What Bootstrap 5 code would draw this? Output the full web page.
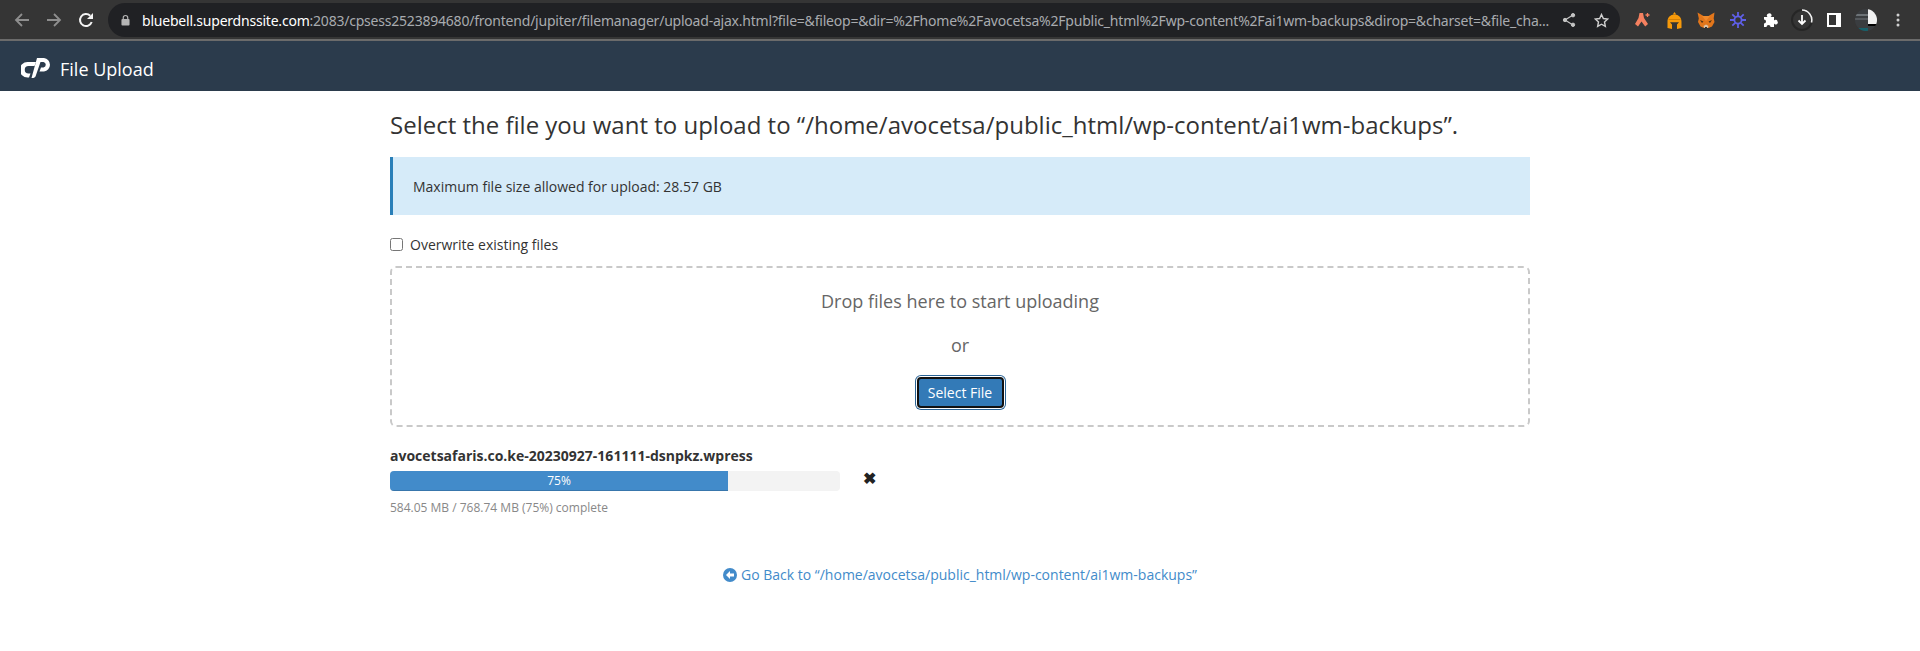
<!DOCTYPE html>
<html lang="en">
<head>
<meta charset="utf-8">
<title>File Upload</title>
<link href="https://cdn.jsdelivr.net/npm/bootstrap@5.3.0/dist/css/bootstrap.min.css" rel="stylesheet">
<style>
body{font-family:"Open Sans","Noto Sans",sans-serif;font-size:14px;color:#333;background:#fff;height:651px;overflow:hidden}
.chrome-bar{height:41px;background:#353535;border-bottom:2px solid #6b6b6b;padding:1px 6px 0 6px}
.tool-slot{width:32px;height:34px;flex:none}
.url-pill{width:1512px;height:34px;background:#202124;border-radius:17px;margin:0 6px;padding:0 3px 0 13px;flex:none}
.url-text{font-family:"Noto Sans",sans-serif;font-size:14px;letter-spacing:-.215px;color:#a8abaf;white-space:nowrap;overflow:hidden;margin-left:12px;min-width:0;flex:1 1 0}
.url-text b{font-weight:400;color:#fff}
.top-nav{height:50px;background:#2b3b4c;padding:3px 0 0 21px;color:#fff;font-size:18px}
.top-nav span{margin-left:9px;padding-top:3px}
.page-box{width:1140px;margin:0 auto}
.page-title{font-size:24px;font-weight:400;line-height:33px;margin:17px 0 0;color:#333;white-space:nowrap}
.note-box{height:58px;margin-top:16px;background:#d6ebf9;border-left:3px solid #2a7fb8;padding-left:20px;font-size:14px}
.over-row{margin-top:19px;height:20px}
.over-row input{width:13px;height:13px;margin:0 7px 0 0}
.drop-box{height:161px;margin-top:12px;border:2px dashed #c9c9c9;border-radius:6px;color:#666;padding-top:21px}
.drop-line{font-size:18px;line-height:25px}
.drop-line+.drop-line{margin-top:19px}
.pick-btn{margin-top:19px;background:#337ab7;color:#fff;font-size:14px;line-height:20px;padding:0;height:31px;width:87px;white-space:nowrap;border:2px solid #111;border-radius:4px;box-shadow:0 0 0 1px #fff,0 0 0 2px #2a6496}
.pick-btn:hover{background:#337ab7;color:#fff;border-color:#111}
.file-name{font-weight:700;font-size:14px;line-height:19px;margin-top:19px}
.bar-track{width:450px;height:20px;border-radius:4px;background:#f3f3f3;overflow:hidden;font-size:12px;margin-top:6px}
.bar-fill{width:338px;background:#428bca;color:#fff;line-height:20px;box-shadow:inset 0 -1px 0 rgba(0,0,0,.15)}
.bar-row{gap:23px}
.x-mark{font-size:16px;font-weight:700;color:#222;line-height:20px;margin-top:3px}
.file-stat{font-size:12px;color:#888;line-height:17px;margin-top:8px}
.back-link{margin-top:49px;line-height:19px}
.back-link a{color:#428bca;text-decoration:none;font-size:14px}
.back-link svg{vertical-align:-2px;margin-right:4px}
</style>
</head>
<body>
<div class="chrome-bar d-flex align-items-center">
  <div class="tool-slot d-flex align-items-center justify-content-center"><svg width="16" height="16" viewBox="0 0 16 16" fill="none" stroke="#8e8e8e" stroke-width="1.8"><path d="M15 8H2M8 2 2 8l6 6"/></svg></div>
  <div class="tool-slot d-flex align-items-center justify-content-center"><svg width="16" height="16" viewBox="0 0 16 16" fill="none" stroke="#8e8e8e" stroke-width="1.8"><path d="M1 8h13M8 2l6 6-6 6"/></svg></div>
  <div class="tool-slot d-flex align-items-center justify-content-center"><svg width="16" height="16" viewBox="0 0 16 16" fill="none" stroke="#f4f4f4" stroke-width="2"><path d="M13.700 10A6 6 0 1 1 12.200 3.700"/><path d="M15 1v6H9z" fill="#f4f4f4" stroke="none"/></svg></div>
  <div class="url-pill d-flex align-items-center">
    <svg width="9" height="12" viewBox="0 0 10 12"><path d="M2.500 5V3.500a2.500 2.500 0 0 1 5 0V5" fill="none" stroke="#b5b5b5" stroke-width="1.300"/><rect x="0.500" y="5" width="9" height="7" rx="1" fill="#b5b5b5"/></svg>
    <div class="url-text"><b>bluebell.superdnssite.com</b>:2083/cpsess2523894680/frontend/jupiter/filemanager/upload-ajax.html?file=&amp;fileop=&amp;dir=%2Fhome%2Favocetsa%2Fpublic_html%2Fwp-content%2Fai1wm-backups&amp;dirop=&amp;charset=&amp;file_cha...</div>
    <div class="tool-slot d-flex align-items-center justify-content-center"><svg width="14" height="14" viewBox="0 0 14 14" fill="#c4c4c4" stroke="#c4c4c4"><path d="M11 2 3 7l8 5" fill="none" stroke-width="1.200"/><circle cx="11" cy="2.200" r="1.700"/><circle cx="3" cy="7" r="1.700"/><circle cx="11" cy="11.800" r="1.700"/></svg></div>
    <div class="tool-slot d-flex align-items-center justify-content-center"><svg width="15" height="15" viewBox="0 0 16 16" fill="none" stroke="#d0d0d0" stroke-width="1.500"><path d="m8 1.600 2 4.300 4.600.5-3.400 3.200.9 4.700L8 12l-4.100 2.300.9-4.700-3.400-3.200L6 5.900z"/></svg></div>
  </div>
  <div class="tool-slot d-flex align-items-center justify-content-center"><svg width="18" height="16" viewBox="0 0 18 16"><path d="M6.500 1h3.500l1 5 4 6-2.800 2.500L8.500 9.500 5 14.500 2 12l3.500-6z" fill="#f5805f"/><path d="M14.500 1v4M12.500 3h4" stroke="#f5805f" stroke-width="1.300"/></svg></div>
  <div class="tool-slot d-flex align-items-center justify-content-center"><svg width="15" height="17" viewBox="0 0 15 17"><path d="M7.500 0 5.800 2.500h3.400z" fill="#f79a0a"/><path d="M7.500 2.500C3.300 2.500.5 5.500.5 9.500V16l4.500 1V12.500L3 10.300h9L10 12.500V17l4.500-1V9.500C14.500 5.500 11.700 2.500 7.500 2.500z" fill="#f79a0a"/><path d="M1.500 7.500h12" stroke="#c97a05" stroke-width=".8"/></svg></div>
  <div class="tool-slot d-flex align-items-center justify-content-center"><svg width="18" height="17" viewBox="0 0 18 17"><path d="M.5.500l6 3.500h5l6-3.500-.8 6 .8 3.500-2.500 4.500-3.500 1.500H7L3.500 14.500 1 10l.8-3.500z" fill="#e2761b"/><path d="M5 4h8L9 9z" fill="#f08a2c"/><path d="M3 8l3.500 1.500L5 11zM15 8l-3.500 1.500L13 11z" fill="#4b3218"/><path d="M6.500 14 9 12.500 11.500 14l-.8 2H7.300z" fill="#dcc6ac"/><path d="M8 15h2v1H8z" fill="#333"/></svg></div>
  <div class="tool-slot d-flex align-items-center justify-content-center"><svg width="16" height="16" viewBox="0 0 16 16" stroke="#5f5fe8" stroke-width="1.800" fill="none"><circle cx="8" cy="8" r="3.600"/><path d="M8 0v4M8 12v4M0 8h4M12 8h4M2.300 2.300l2.900 2.900M10.800 10.800l2.900 2.900M13.700 2.300l-2.900 2.900M5.200 10.800l-2.900 2.900"/></svg></div>
  <div class="tool-slot d-flex align-items-center justify-content-center"><svg width="15" height="15" viewBox="0 0 15 15" fill="#fff"><path d="M1 4h3.500a2 2 0 0 1 1-3.500 2 2 0 0 1 2 3.500H11v3.500a2 2 0 0 1 3.500 1 2 2 0 0 1-3.500 2V14H7.500a2 2 0 0 0-4 0H1v-3.500a2 2 0 0 0 0-4z"/></svg></div>
  <div class="tool-slot d-flex align-items-center justify-content-center"><svg width="22" height="22" viewBox="0 0 22 22" fill="none"><circle cx="11" cy="11" r="10" stroke="#262626" stroke-width="2"/><path d="M11 1a10 10 0 0 1 9.500 12.500" stroke="#f1f1f1" stroke-width="1.600"/><path d="M11 6v9M7.500 11.500 11 15l3.500-3.500" stroke="#fff" stroke-width="1.800"/></svg></div>
  <div class="tool-slot d-flex align-items-center justify-content-center"><svg width="14" height="14" viewBox="0 0 14 14"><path fill-rule="evenodd" d="M0 0h14v14H0zM2 2v10h7V2z" fill="#fff"/></svg></div>
  <div class="tool-slot d-flex align-items-center justify-content-center"><svg width="22" height="22" viewBox="0 0 22 22"><defs><clipPath id="av"><circle cx="11" cy="11" r="11"/></clipPath></defs><g clip-path="url(#av)"><rect width="22" height="22" fill="#3a3d40"/><rect y="5" width="13" height="2" fill="#6c7276"/><rect y="9" width="13" height="2" fill="#55595d"/><rect y="19" width="13" height="3" fill="#17616b"/><rect x="13" width="9" height="15" fill="#f1f1f1"/><rect x="13" y="15" width="9" height="2" fill="#000"/></g></svg></div>
  <div class="tool-slot d-flex align-items-center justify-content-center"><svg width="4" height="14" viewBox="0 0 4 14" fill="#d0d0d0"><circle cx="2" cy="2" r="1.500"/><circle cx="2" cy="7" r="1.500"/><circle cx="2" cy="12" r="1.500"/></svg></div>
</div>
<nav class="top-nav d-flex align-items-center">
  <svg width="30" height="20" viewBox="0 0 30 20" fill="#fff"><path d="M6.500 4H15L13.500 8H7.500a3.500 3.500 0 0 0 0 7.500H9.500L8 19.500H6.500a7.700 7.700 0 0 1 0-15.500z"/><path d="M16 0H23a6.800 6.800 0 0 1 0 13.500H18.500L20 9.500h2.500a2.800 2.800 0 0 0 0-5.500h-3L14.500 18.500Q13 20.500 10.500 20z"/></svg>
  <span>File Upload</span>
</nav>
<main class="page-box">
  <h1 class="page-title">Select the file you want to upload to “/home/avocetsa/public_html/wp-content/ai1wm-backups”.</h1>
  <div class="note-box d-flex align-items-center">Maximum file size allowed for upload: 28.57 GB</div>
  <div class="over-row d-flex align-items-center"><input type="checkbox" id="over"><label for="over">Overwrite existing files</label></div>
  <div class="drop-box text-center">
    <div class="drop-line">Drop files here to start uploading</div>
    <div class="drop-line">or</div>
    <button type="button" class="btn pick-btn">Select File</button>
  </div>
  <div class="file-name">avocetsafaris.co.ke-20230927-161111-dsnpkz.wpress</div>
  <div class="d-flex bar-row">
    <div class="bar-track d-flex"><div class="bar-fill text-center">75%</div></div>
    <div class="x-mark">✖</div>
  </div>
  <div class="file-stat">584.05 MB / 768.74 MB (75%) complete</div>
  <div class="back-link text-center"><a href="#"><svg width="14" height="14" viewBox="0 0 14 14"><circle cx="7" cy="7" r="7" fill="#428bca"/><path d="M7 3 3 7l4 4V8.500h4v-3H7z" fill="#fff"/></svg>Go Back to “/home/avocetsa/public_html/wp-content/ai1wm-backups”</a></div>
</main>
<script src="https://cdn.jsdelivr.net/npm/bootstrap@5.3.0/dist/js/bootstrap.bundle.min.js"></script>
</body>
</html>
